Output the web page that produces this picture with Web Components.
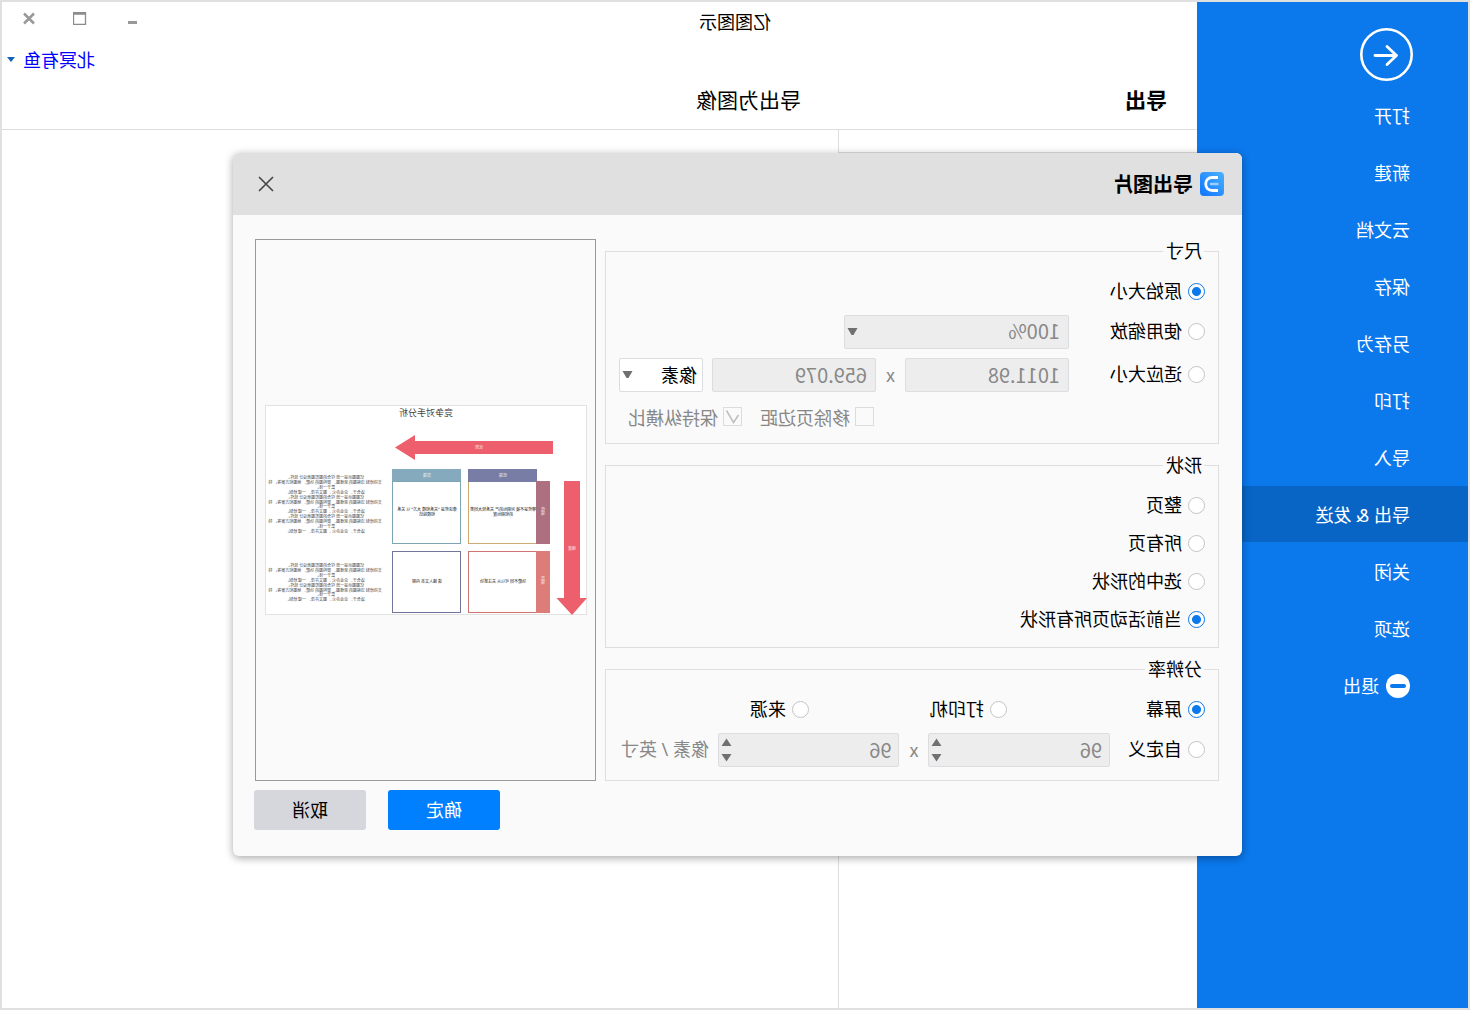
<!DOCTYPE html>
<html lang="zh-CN">
<head>
<meta charset="utf-8">
<title>亿图图示</title>
<style>
  body { margin: 0; background: #fff; font-family: "Noto Sans CJK SC", "Noto Sans", sans-serif; font-size: 18px; line-height: 24px; color: #000; }
</style>
</head>
<body>
<app-window></app-window>
<script>
const define = (name, html, setup) => {
  const template = document.createElement('template');
  template.innerHTML = '<style>*{box-sizing:border-box}button,input,select{font:inherit;color:inherit;margin:0}</style>' + html;
  customElements.define(name, class extends HTMLElement {
    constructor() {
      super();
      this.attachShadow({ mode: 'open' }).append(template.content.cloneNode(true));
    }
    connectedCallback() { if (setup) setup(this, this.shadowRoot); }
  });
};

/* ---------- form controls ---------- */
define('radio-option', `
<style>
  :host { display: block; }
  label { display: flex; align-items: center; gap: 6px; white-space: nowrap; }
  span { padding-bottom: 2px; }
  input { appearance: none; width: 17px; height: 17px; border: 1px solid #c4c4c4; border-radius: 50%; background: #fff; flex: none; }
  input:checked { border-color: #0b78ec; background: radial-gradient(circle, #0b78ec 4px, #fff 5px); }
</style>
<label><input type="radio"><span><slot></slot></span></label>`, (host, root) => {
  const input = root.querySelector('input');
  input.checked = host.hasAttribute('checked');
  input.addEventListener('change', () => {
    const group = host.closest('group-box');
    group.querySelectorAll('radio-option').forEach(o => {
      if (o !== host) o.shadowRoot.querySelector('input').checked = false;
    });
  });
});

define('check-option', `
<style>
  :host { display: block; color: #888; }
  label { display: flex; align-items: center; gap: 5px; white-space: nowrap; }
  .box { display: grid; width: 19px; height: 19px; flex: none; }
  input, svg { grid-area: 1 / 1; width: 19px; height: 19px; }
  input { appearance: none; border: 1px solid #dcdcdc; background: #fafafa; }
  svg { display: none; pointer-events: none; z-index: 1; }
  input:checked + svg { display: block; }
</style>
<label><span class="box"><input type="checkbox" disabled><svg viewBox="0 0 19 19"><path d="M3.500 8 8.500 15.500 15.500 3.500" fill="none" stroke="#c0c0c0" stroke-width="1.600"/></svg></span><span><slot></slot></span></label>`, (host, root) => {
  root.querySelector('input').checked = host.hasAttribute('checked');
});

define('text-field', `
<style>
  :host { display: block; min-width: 0; }
  input { display: block; width: 100%; height: 34px; padding: 0 8px 2px; border: 1px solid #dcdde0; border-radius: 2px; background: #ededed; color: #888; font-size: 20px; }
</style>
<input type="text" disabled>`, (host, root) => {
  const input = root.querySelector('input');
  input.value = host.getAttribute('value');
  input.setAttribute('aria-label', host.getAttribute('label'));
});

define('spin-field', `
<style>
  :host { display: grid; min-width: 0; }
  input, .arrows { grid-area: 1 / 1; }
  input { width: 100%; height: 34px; padding: 0 24px 2px 7px; border: 1px solid #dcdde0; border-radius: 2px; background: #ededed; color: #888; font-size: 20px; appearance: textfield; }
  input::-webkit-inner-spin-button { display: none; }
  .arrows { justify-self: end; align-self: center; width: 11px; height: 24px; margin-right: 3px; z-index: 1; }
</style>
<input type="number" disabled>
<svg class="arrows" viewBox="0 0 11 24"><path d="M.5 8 5.500 .5 10.500 8ZM.5 16 5.500 23.500 10.500 16Z" fill="#707070"/></svg>`, (host, root) => {
  const input = root.querySelector('input');
  input.value = host.getAttribute('value');
  input.setAttribute('aria-label', host.getAttribute('label'));
});

define('combo-box', `
<style>
  :host { display: grid; min-width: 0; }
  select, svg { grid-area: 1 / 1; }
  select { appearance: none; width: 100%; height: 34px; padding: 0 5px 2px; border: 1px solid #dcdde0; border-radius: 2px; background: #fff; opacity: 1; }
  select:disabled { background: #ededed; color: #888; padding: 0 8px 2px; font-size: 20px; }
  svg { justify-self: end; align-self: center; width: 11px; height: 8px; margin-right: 3px; z-index: 1; pointer-events: none; }
</style>
<select><option></option></select>
<svg viewBox="0 0 11 8"><path d="M.5 0H10.500L6.500 7H4.500Z" fill="#707070"/></svg>`, (host, root) => {
  const select = root.querySelector('select');
  select.options[0].textContent = host.getAttribute('value');
  select.disabled = host.hasAttribute('disabled');
  select.setAttribute('aria-label', host.getAttribute('label'));
});

define('push-button', `
<style>
  :host { display: block; }
  button { display: block; width: 112px; height: 40px; border: 0; border-radius: 3px; background: #d5d7dc; color: #000; padding: 0 0 2px; }
  :host([primary]) button { background: #0080ff; color: #fff; }
</style>
<button type="button"><slot></slot></button>`);

define('group-box', `
<style>
  :host { display: block; }
  fieldset { margin: 0; min-width: 0; padding: 12px 13px 13px; border: 1px solid #dedede; }
  legend { margin-left: 1px; padding: 0 3px 2px 2px; line-height: 23px; }
  .rows { display: flex; flex-direction: column; gap: 9px; }
  :host([dense]) .rows { gap: 8px; }
</style>
<fieldset><legend><slot name="legend"></slot></legend><div class="rows"><slot></slot></div></fieldset>`);

/* ---------- preview ---------- */
define('diagram-preview', `
<style>
  :host { display: flex; align-items: center; padding-left: 8px; border: 1px solid #999; background: #fafafa; }
  svg { display: block; width: 322px; height: 211px; }
  text { font-family: "Noto Sans CJK SC", sans-serif; text-anchor: middle; }
  .body text { font-size: 4px; fill: #444; }
  .card text { font-size: 4px; fill: #111; }
  .tag { font-size: 4px; fill: #fff; opacity: .85; }
</style>
<svg viewBox="1 0 322 211" role="img" aria-label="竞争对手分析">
  <rect x="1.500" y=".5" width="321" height="209" fill="#fff" stroke="#e2e2e2"/>
  <text x="162" y="11" font-size="9" fill="#444">竞争对手分析</text>
  <path d="M35 36H173V30L193 42.500 173 55V49H35Z" fill="#ed5f6c"/>
  <path d="M8 76H24V193H31.500L16 210 1 193H8Z" fill="#ed5f6c"/>
  <rect x="51" y="64" width="69" height="13" fill="#777da4"/>
  <rect x="127" y="64" width="69" height="13" fill="#85aabd"/>
  <rect x="51.500" y="76.500" width="68" height="62" fill="#fff" stroke="#cfab74"/>
  <path d="M51 76.500H120" stroke="#777da4"/>
  <rect x="127.500" y="76.500" width="68" height="62" fill="#fff" stroke="#7ca6b4"/>
  <rect x="51.500" y="146.500" width="68" height="61" fill="#fff" stroke="#d07672"/>
  <rect x="127.500" y="146.500" width="68" height="61" fill="#fff" stroke="#71759c"/>
  <rect x="38" y="76" width="14" height="63" fill="#ad7080"/>
  <rect x="38" y="146" width="14" height="62" fill="#dd7d79"/>
  <g class="tag">
    <text x="109" y="44">优势</text><text x="85" y="72">低端</text><text x="161" y="72">高端</text>
    <text x="16" y="145">强度</text>
    <text x="45" y="106">低</text><text x="45" y="110">端</text>
    <text x="45" y="175">高</text><text x="45" y="179">端</text>
  </g>
  <g class="card">
    <text x="85" y="106">哪些是不被 对相似的产 关系较大同类</text><text x="85" y="111">的和相似度</text>
    <text x="161" y="106">像这些是 "关系和模 大方" 以 关系</text><text x="161" y="111">和模拟仿</text>
    <text x="85" y="178">功能不同 可以从 关注新功</text>
    <text x="161" y="178">请 输入文本 内容</text>
  </g>
  <g class="body"></g>
</svg>`, (host, root) => {
  const lines = ['亿图图示是一款 综合的图形图表设计 软件。', '支持绘制 流程图的 思维图、 架构图的 功能、 地图和方案等。 特', '集于一体。', '适合于、 企业办公 、图文并茂、 一键 绘制。'];
  const body = root.querySelector('.body');
  for (const [top, count] of [[74, 12], [162, 8]]) {
    for (let i = 0; i < count; i++) {
      const t = document.createElementNS('http://www.w3.org/2000/svg', 'text');
      t.setAttribute('x', 263);
      t.setAttribute('y', Math.round(top + i * 4.9));
      t.textContent = lines[i % 4];
      body.append(t);
    }
  }
});

/* ---------- dialog ---------- */
define('export-dialog', `
<style>
  :host { display: block; border-radius: 6px; background: #fafafa; box-shadow: 0 2px 9px rgba(0,0,0,.35); overflow: hidden; }
  header { display: flex; align-items: center; height: 62px; padding: 0 24px 0 18px; background: #e0e0e0; }
  .logo { width: 24px; height: 24px; margin-right: 7px; }
  h2 { flex: 1; margin: 0; font-size: 20px; line-height: 30px; font-weight: 700; }
  header button { display: grid; place-items: center; width: 18px; height: 18px; padding: 0; border: 0; background: none; }
  .content { display: flex; gap: 9px; padding: 24px 22px 9px 23px; }
  .groups { flex: 1; min-width: 0; display: flex; flex-direction: column; gap: 9px; }
  diagram-preview { width: 341px; flex: none; }
  .row { display: flex; align-items: center; height: 34px; }
  .row radio-option { padding-bottom: 2px; }
  .row.slim { height: 30px; }
  .row.slim radio-option { padding-bottom: 0; }
  .row.checks { height: 29px; gap: 18px; justify-content: flex-end; padding: 2px 9px 0 0; }
  .lead { width: 136px; flex: none; }
  .lead.short { width: 95px; }
  .third { width: 198px; }
  .grow { flex: 1; }
  .half { width: 225px; }
  .by { width: 29px; flex: none; padding-bottom: 2px; text-align: center; color: #888; }
  .unit { width: 84px; flex: none; margin-left: 9px; }
  .per { width: 90px; flex: none; margin-left: 9px; padding-bottom: 2px; white-space: nowrap; color: #888; font-family: "Noto Sans", "Noto Sans CJK SC", sans-serif; }
  footer { display: flex; justify-content: flex-end; gap: 22px; padding: 0 21px 26px; }
</style>
<header>
  <svg class="logo" viewBox="0 0 24 24"><defs><linearGradient id="g" x1="0" y1="0" x2="1" y2="1"><stop offset="0" stop-color="#4bb2ff"/><stop offset="1" stop-color="#0f74ff"/></linearGradient></defs><rect width="24" height="24" rx="4" fill="url(#g)"/><path d="M6 5.500H11.500C20.500 5.500 20.500 18.500 11.500 18.500H6" fill="none" stroke="#fff" stroke-width="2.800"/><path d="M6.500 12H13" stroke="#9acfff" stroke-width="2.500" stroke-linecap="round"/></svg>
  <h2>导出图片</h2>
  <button type="button" aria-label="关闭"><svg width="16" height="16" viewBox="0 0 16 16"><path d="M1 1 15 15M15 1 1 15" stroke="#444" stroke-width="1.600"/></svg></button>
</header>
<div class="content">
  <div class="groups">
    <group-box>
      <span slot="legend">尺寸</span>
      <div class="row slim"><radio-option checked>原始大小</radio-option></div>
      <div class="row"><radio-option class="lead">使用缩放</radio-option><combo-box class="half" value="100%" label="缩放" disabled></combo-box></div>
      <div class="row"><radio-option class="lead">适应大小</radio-option><text-field class="grow" value="1011.98" label="宽度"></text-field><span class="by">x</span><text-field class="grow" value="659.079" label="高度"></text-field><combo-box class="unit" value="像素" label="单位"></combo-box></div>
      <div class="row checks"><check-option>移除页边距</check-option><check-option checked>保持纵横比</check-option></div>
    </group-box>
    <group-box dense>
      <span slot="legend">形状</span>
      <div class="row slim"><radio-option>整页</radio-option></div>
      <div class="row slim"><radio-option>所有页</radio-option></div>
      <div class="row slim"><radio-option>选中的形状</radio-option></div>
      <div class="row slim"><radio-option checked>当前活动页所有形状</radio-option></div>
    </group-box>
    <group-box>
      <span slot="legend">分辨率</span>
      <div class="row slim"><radio-option class="third" checked>屏幕</radio-option><radio-option class="third">打印机</radio-option><radio-option>来源</radio-option></div>
      <div class="row"><radio-option class="lead short">自定义</radio-option><spin-field class="grow" value="96" label="水平分辨率"></spin-field><span class="by">x</span><spin-field class="grow" value="96" label="垂直分辨率"></spin-field><span class="per">像素 / 英寸</span></div>
    </group-box>
  </div>
  <diagram-preview></diagram-preview>
</div>
<footer><push-button primary>确定</push-button><push-button>取消</push-button></footer>`);

/* ---------- shell ---------- */
define('nav-item', `
<style>
  :host { display: block; }
  button { display: flex; align-items: center; gap: 7px; width: 100%; height: 56px; padding: 2px 0 0 58px; border: 0; background: none; color: #fff; text-align: left; font-family: "Noto Sans", "Noto Sans CJK SC", sans-serif; }
  :host([active]) button { background: #0865c6; }
</style>
<button type="button"><slot name="icon"></slot><span><slot></slot></span></button>`);

define('side-nav', `
<style>
  :host { display: block; background: #0b78ec; }
  .back { display: block; margin: 26px 0 6px 55px; padding: 0; border: 0; background: none; width: 53px; height: 53px; }
  .back svg, nav-item svg { display: block; }
  nav { display: flex; flex-direction: column; gap: 1px; }
</style>
<button class="back" type="button" aria-label="返回"><svg width="53" height="53" viewBox="0 0 53 53" fill="none" stroke="#fff"><circle cx="26.500" cy="26.500" r="25.200" stroke-width="2.600"/><path d="M38 27.500H16.500M26 18.500 16.500 27.500 26 36.500" stroke-width="2.800" stroke-linecap="round" stroke-linejoin="round"/></svg></button>
<nav>
  <nav-item>打开</nav-item><nav-item>新建</nav-item><nav-item>云文档</nav-item><nav-item>保存</nav-item><nav-item>另存为</nav-item><nav-item>打印</nav-item><nav-item>导入</nav-item><nav-item active>导出 &amp; 发送</nav-item><nav-item>关闭</nav-item><nav-item>选项</nav-item>
  <nav-item><svg slot="icon" width="24" height="24" viewBox="0 0 24 24"><circle cx="12" cy="12" r="12" fill="#fff"/><path d="M6 12H18" stroke="#0b78ec" stroke-width="4" stroke-linecap="round"/></svg>退出</nav-item>
</nav>`);

define('title-bar', `
<style>
  :host { display: grid; grid-template-columns: 1fr auto 1fr; align-items: center; }
  h1 { grid-column: 2; margin: 0; font-size: 18px; font-weight: 400; }
  .controls { display: flex; justify-content: flex-end; padding: 0 0 5px; }
  button { display: grid; place-items: center; width: 52px; height: 33px; padding: 0; border: 0; background: none; }
</style>
<h1>亿图图示</h1>
<div class="controls">
  <button type="button" aria-label="最小化"><svg width="14" height="13" viewBox="0 0 14 13"><path d="M2 10.500H11" stroke="#999" stroke-width="3"/></svg></button>
  <button type="button" aria-label="最大化"><svg width="14" height="13" viewBox="0 0 14 13"><path d="M1.500 .5H13.500V12.500H1.500ZM1 2H14" fill="none" stroke="#8c8c8c" stroke-width="1.300"/></svg></button>
  <button type="button" aria-label="关闭窗口"><svg width="14" height="13" viewBox="0 0 14 13"><path d="M1 1.500 11 11.500M11 1.500 1 11.500" stroke="#999" stroke-width="2.500"/></svg></button>
</div>`);

define('export-page', `
<style>
  :host { display: flex; flex-direction: column; --list: 359px; }
  .user { display: flex; justify-content: flex-end; align-items: center; height: 38px; padding-right: 5px; }
  .user a { display: flex; align-items: center; gap: 8px; color: #00f; text-decoration: none; }
  .heads { display: flex; flex: none; height: 52px; border-bottom: 1px solid #dedede; font-size: 21px; line-height: 42px; }
  h2, h3 { margin: 0; font-size: 21px; }
  h2 { width: var(--list); padding-left: 30px; }
  h3 { padding-left: 37px; font-weight: 400; }
  .body { flex: 1; display: flex; }
  .list { width: var(--list); border-right: 1px solid #dedede; }
  .list div { height: 23px; border-bottom: 1px solid #dedede; }
</style>
<div class="user"><a href="#account"><span>北冥有鱼</span><svg width="8" height="5" viewBox="0 0 8 5"><path d="M0 0H8L4 5Z" fill="#1260b8"/></svg></a></div>
<div class="heads"><h2>导出</h2><h3>导出为图像</h3></div>
<div class="body"><div class="list"><div></div></div></div>`);

/* The whole window is shown flipped left to right. */
define('app-window', `
<style>
  :host { position: relative; display: grid; grid-template: 38px 1fr / 271px 1fr; min-height: 100vh; box-sizing: border-box; border: 2px solid #e0e0e0; background: #fff; transform: scaleX(-1); }
  side-nav { grid-area: 1 / 1 / 3 / 2; }
  title-bar { grid-area: 1 / 1 / 2 / 3; }
  export-page { grid-area: 2 / 2; }
  export-dialog { position: absolute; top: 151px; left: 226px; right: 231px; }
</style>
<side-nav></side-nav>
<title-bar></title-bar>
<export-page></export-page>
<export-dialog></export-dialog>`);
</script>
</body>
</html>
